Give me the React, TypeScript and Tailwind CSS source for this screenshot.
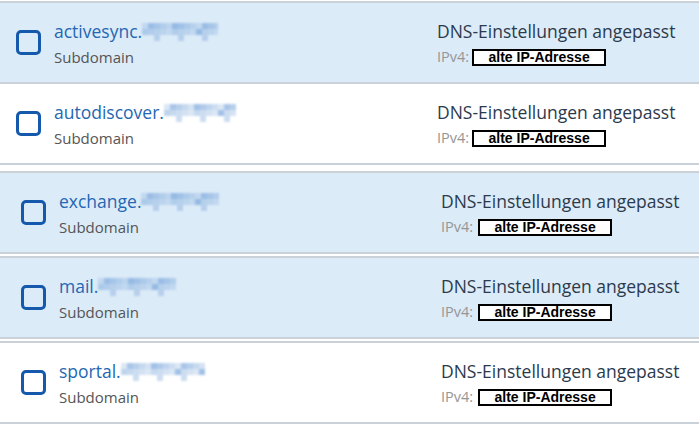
import React from "react";

type Row = {
  name: string;
  blurW: number;
  blue: boolean;
  shift: boolean;
};

const rows: Row[] = [
  { name: "activesync.", blurW: 76, blue: true, shift: false },
  { name: "autodiscover.", blurW: 73, blue: false, shift: false },
  { name: "exchange.", blurW: 78, blue: true, shift: true },
  { name: "mail.", blurW: 80, blue: true, shift: true },
  { name: "sportal.", blurW: 84, blue: false, shift: true },
];

function Mosaic({ w }: { w: number }) {
  const cols = Math.round(w / 6);
  const cells: React.ReactNode[] = [];
  for (let r = 0; r < 3; r++) {
    for (let c = 0; c < cols; c++) {
      const v = ((c * 7 + r * 13 + (c * r) % 5) % 9) / 9;
      const op = r === 2 ? (c % 4 === 2 ? 0.35 : 0) : 0.25 + v * 0.45;
      cells.push(
        <rect key={r + "-" + c} x={c * 6} y={r * 6} width={6} height={6} fill="#6f9fd8" opacity={op} />
      );
    }
  }
  return (
    <svg width={w} height={18} className="inline-block align-middle" style={{ filter: "blur(0.8px)" }}>
      {cells}
    </svg>
  );
}

function Checkbox() {
  return <div className="w-[25px] h-[25px] rounded-[5px] border-[3px] border-[#1559ad] shrink-0" />;
}

function RowView({ r }: { r: Row }) {
  return (
    <div className={"flex items-center h-[79px] " + (r.blue ? "bg-[#dcebf8]" : "bg-white")}>
      <div className={r.shift ? "pl-[21px]" : "pl-[16px]"}>
        <Checkbox />
      </div>
      <div className={"flex flex-col pt-[4px] " + (r.shift ? "ml-[13px] w-[382px]" : "ml-[13px] w-[383px]")}>
        <div className="flex items-center h-[22px] text-[17.5px] text-[#2467b3] leading-none">
          <span>{r.name}</span>
          <Mosaic w={r.blurW} />
        </div>
        <div className="mt-[3px] text-[15px] text-[#555555] leading-[22px]">Subdomain</div>
      </div>
      <div className="flex flex-col pt-[4px]">
        <div className="h-[22px] flex items-center text-[17.5px] text-[#2b3a4c] leading-none">
          DNS-Einstellungen angepasst
        </div>
        <div className="mt-[3px] h-[22px] flex items-center">
          <span className="text-[14.5px] text-[#969696]">IPv4:</span>
          <span
            className={
              "inline-flex items-center justify-center w-[134px] h-[17px] border-2 border-black bg-white text-black font-bold text-[14px] leading-none " +
              (r.shift ? "ml-[5px]" : "ml-[3px]")
            }
            style={{ fontFamily: "'Liberation Sans', Arial, sans-serif" }}
          >
            alte IP-Adresse
          </span>
        </div>
      </div>
    </div>
  );
}

export default function App() {
  const line = "h-[2px] bg-[#cbd1d9]";
  return (
    <div
      className="w-[699px] h-[425px] bg-white overflow-hidden"
      style={{ fontFamily: "'Open Sans', 'Noto Sans', sans-serif" }}
    >
      <div className="h-[1px] bg-white" />
      <div className={line} />
      <RowView r={rows[0]} />
      <div className={line} />
      <RowView r={rows[1]} />
      <div className={line} />
      <div className="h-[6px]" />
      <div className={line} />
      <RowView r={rows[2]} />
      <div className={line} />
      <div className="h-[2px]" />
      <div className={line} />
      <RowView r={rows[3]} />
      <div className={line} />
      <div className="h-[2px]" />
      <div className={line} />
      <RowView r={rows[4]} />
      <div className={line} />
    </div>
  );
}
